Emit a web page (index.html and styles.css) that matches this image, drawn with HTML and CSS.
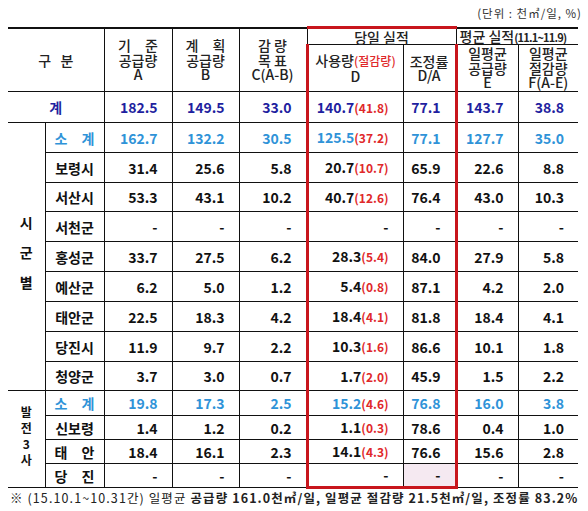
FILE: index.html
```html
<!DOCTYPE html>
<html>
<head>
    <link rel="stylesheet" href="styles.css">
</head>
<body>
    <div class="unit">(단위 : 천㎥/일, %)</div>

    <table class="supply">
        <colgroup>
            <col class="c-grp">
            <col class="c-name">
            <col class="c-a">
            <col class="c-b">
            <col class="c-c">
            <col class="c-d">
            <col class="c-da">
            <col class="c-e">
            <col class="c-f">
        </colgroup>
        <thead>
            <tr class="head-top">
                <th colspan="2" rowspan="2">구 &nbsp;&nbsp;분</th>
                <th rowspan="2">기　준<br>공급량<br>A</th>
                <th rowspan="2">계　획<br>공급량<br>B</th>
                <th rowspan="2">감 량<br>목 표<br>C(A-B)</th>
                <th colspan="2" class="today">당일 실적</th>
                <th colspan="2" class="avg">평균 실적<small>(11.1~11.9)</small></th>
            </tr>
            <tr class="head-sub">
                <th class="d">사용량<em>(절감량)</em><br>D</th>
                <th class="da">조정률<br>D/A</th>
                <th>일평균<br>공급량<br>E</th>
                <th>일평균<br>절감량<br>F(A-E)</th>
            </tr>
        </thead>
        <tbody>
            <tr class="total">
                <td colspan="2" class="name">계</td>
                <td>182.5</td><td>149.5</td><td>33.0</td>
                <td class="d">140.7<em>(41.8)</em></td><td class="da">77.1</td>
                <td>143.7</td><td>38.8</td>
            </tr>

            <tr class="sub">
                <td rowspan="9" class="grp city">시<br>군<br>별</td>
                <td class="name">소　계</td>
                <td>162.7</td><td>132.2</td><td>30.5</td>
                <td class="d">125.5<em>(37.2)</em></td><td class="da">77.1</td>
                <td>127.7</td><td>35.0</td>
            </tr>
            <tr>
                <td class="name">보령시</td>
                <td>31.4</td><td>25.6</td><td>5.8</td>
                <td class="d">20.7<em>(10.7)</em></td><td class="da">65.9</td>
                <td>22.6</td><td>8.8</td>
            </tr>
            <tr class="short">
                <td class="name">서산시</td>
                <td>53.3</td><td>43.1</td><td>10.2</td>
                <td class="d">40.7<em>(12.6)</em></td><td class="da">76.4</td>
                <td>43.0</td><td>10.3</td>
            </tr>
            <tr>
                <td class="name">서천군</td>
                <td>-</td><td>-</td><td>-</td>
                <td class="d">-</td><td class="da">-</td>
                <td>-</td><td>-</td>
            </tr>
            <tr>
                <td class="name">홍성군</td>
                <td>33.7</td><td>27.5</td><td>6.2</td>
                <td class="d">28.3<em>(5.4)</em></td><td class="da">84.0</td>
                <td>27.9</td><td>5.8</td>
            </tr>
            <tr>
                <td class="name">예산군</td>
                <td>6.2</td><td>5.0</td><td>1.2</td>
                <td class="d">5.4<em>(0.8)</em></td><td class="da">87.1</td>
                <td>4.2</td><td>2.0</td>
            </tr>
            <tr>
                <td class="name">태안군</td>
                <td>22.5</td><td>18.3</td><td>4.2</td>
                <td class="d">18.4<em>(4.1)</em></td><td class="da">81.8</td>
                <td>18.4</td><td>4.1</td>
            </tr>
            <tr>
                <td class="name">당진시</td>
                <td>11.9</td><td>9.7</td><td>2.2</td>
                <td class="d">10.3<em>(1.6)</em></td><td class="da">86.6</td>
                <td>10.1</td><td>1.8</td>
            </tr>
            <tr class="short">
                <td class="name">청양군</td>
                <td>3.7</td><td>3.0</td><td>0.7</td>
                <td class="d">1.7<em>(2.0)</em></td><td class="da">45.9</td>
                <td>1.5</td><td>2.2</td>
            </tr>

            <tr class="sub plant-sub">
                <td rowspan="4" class="grp power">발<br>전<br>3<br>사</td>
                <td class="name">소　계</td>
                <td>19.8</td><td>17.3</td><td>2.5</td>
                <td class="d">15.2<em>(4.6)</em></td><td class="da">76.8</td>
                <td>16.0</td><td>3.8</td>
            </tr>
            <tr class="plant">
                <td class="name">신보령</td>
                <td>1.4</td><td>1.2</td><td>0.2</td>
                <td class="d">1.1<em>(0.3)</em></td><td class="da">78.6</td>
                <td>0.4</td><td>1.0</td>
            </tr>
            <tr class="plant">
                <td class="name">태　안</td>
                <td>18.4</td><td>16.1</td><td>2.3</td>
                <td class="d">14.1<em>(4.3)</em></td><td class="da">76.6</td>
                <td>15.6</td><td>2.8</td>
            </tr>
            <tr class="plant last">
                <td class="name">당　진</td>
                <td>-</td><td>-</td><td>-</td>
                <td class="d">-</td><td class="da pink">-</td>
                <td>-</td><td>-</td>
            </tr>
        </tbody>
    </table>

    <p class="note">※ (15.10.1~10.31간) 일평균 <b>공급량 161.0천㎥/일, 일평균 절감량 21.5천㎥/일, 조정률 83.2%</b></p>
</body>
</html>
```

FILE: styles.css
```css
body {
    margin: 0;
    padding: 0 10px 0 8px;
    font-family: "Noto Sans CJK KR", "Noto Sans", sans-serif;
    color: #111;
    background-color: white;
}

.unit {
    height: 26px;
    line-height: 26px;
    margin-right: -4px;
    text-align: right;
    font-size: 11.5px;
    letter-spacing: 1px;
    color: #333;
}

.supply {
    width: 570px;
    border-collapse: collapse;
    table-layout: fixed;
    border-top: 2px solid #111;
    border-left: hidden;
    border-right: hidden;
}

.supply th,
.supply td {
    border: 1px solid #111;
    padding: 0;
    white-space: nowrap;
}

.supply td {
    overflow: hidden;
}

.c-grp { width: 37px; }
.c-name { width: 59px; }
.c-a { width: 68px; }
.c-b { width: 67px; }
.c-c { width: 68px; }
.c-d { width: 96px; }
.c-da { width: 53px; }
.c-e { width: 62px; }
.c-f { width: 60px; }

/* header */
.supply th {
    font-size: 14px;
    font-weight: 500;
    line-height: 14.5px;
    color: #222;
    text-align: center;
}

.supply tr.head-top { height: 17px; }
.supply tr.head-sub { height: 47px; }

.supply th.today {
    border-top: 3px solid #c8161d;
    line-height: 14px;
}

.supply th.avg {
    line-height: 14px;
    text-align: left;
    padding-left: 3px;
}

.avg small {
    font-size: 11px;
    font-weight: bold;
    letter-spacing: -0.8px;
}

.supply th em {
    font-style: normal;
    font-size: 12px;
    color: #e0282a;
}

/* body */
.supply td {
    font-size: 14px;
    font-weight: bold;
    line-height: 18px;
    text-align: right;
    padding-right: 14px;
}

.supply tbody tr { height: 30px; }
.supply tbody tr.short { height: 29px; }
.supply tbody tr.total { height: 31px; }
.supply tbody tr.plant-sub { height: 25px; }
.supply tbody tr.plant { height: 24px; }

.supply td em {
    font-style: normal;
    font-size: 12px;
    color: #e0282a;
}

.supply td.name {
    text-align: center;
    padding-right: 0;
}

.supply td.grp {
    text-align: center;
    padding-right: 0;
}

.grp.city {
    line-height: 30px;
    padding-bottom: 10px;
}

.grp.power {
    font-size: 12px;
    line-height: 16px;
    padding-bottom: 6px;
}

.total td { color: #1f1fa0; }
.sub td { color: #2f93d8; }
.sub td.grp { color: #111; }

.supply .d { border-left: 3px solid #c8161d; }
.supply .da { border-right: 3px solid #c8161d; }
.last .d,
.last .da { border-bottom: 3px solid #c8161d; }

.da.pink { background-color: #f5e9f1; }

.note {
    margin: 0 0 0 2px;
    font-size: 12.5px;
    line-height: 18px;
    letter-spacing: 1.1px;
    color: #222;
    white-space: nowrap;
}
```
